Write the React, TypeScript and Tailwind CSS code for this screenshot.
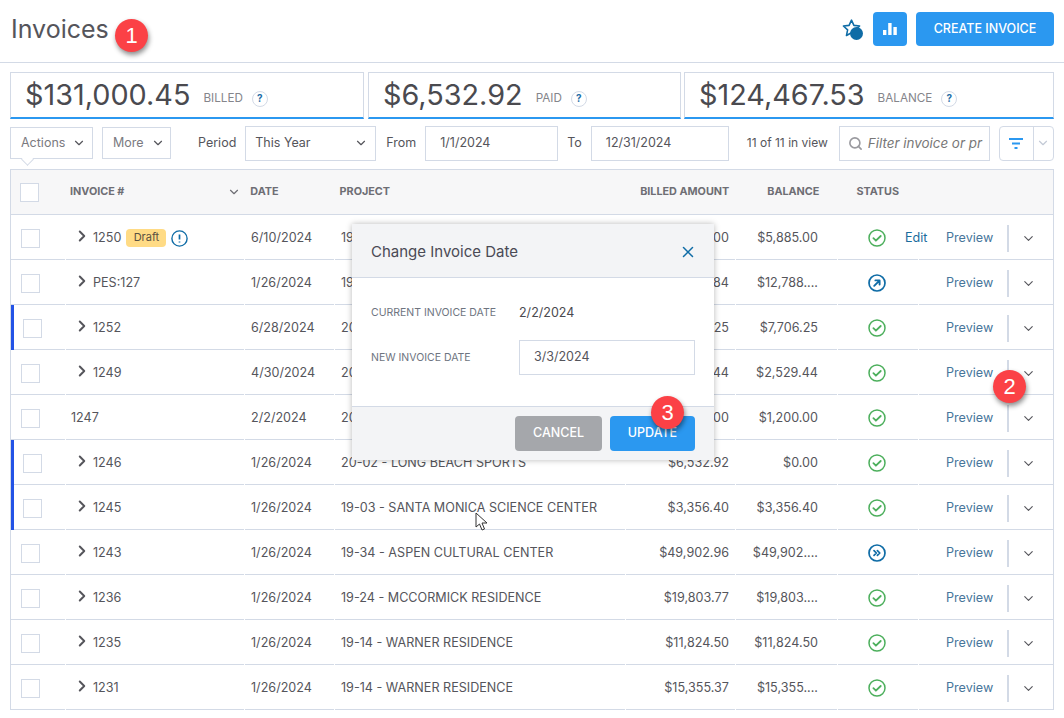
import React from 'react'
import { ChevronDown, ChevronRight, Search, X } from 'lucide-react'

interface Row {
  id: string
  date: string
  project: string
  billed: string
  balance: string
  status: 'ok' | 'sent' | 'forward'
  bar?: boolean
  noExpand?: boolean
  draft?: boolean
}

const rows: Row[] = [
  { id: '1250', date: '6/10/2024', project: '19-24 - MCCORMICK RESIDENCE', billed: '$5,885.00', balance: '$5,885.00', status: 'ok', draft: true },
  { id: 'PES:127', date: '1/26/2024', project: '19-34 - ASPEN CULTURAL CENTER', billed: '$12,788.84', balance: '$12,788....', status: 'sent' },
  { id: '1252', date: '6/28/2024', project: '20-02 - LONG BEACH SPORTS', billed: '$7,706.25', balance: '$7,706.25', status: 'ok', bar: true },
  { id: '1249', date: '4/30/2024', project: '20-02 - LONG BEACH SPORTS', billed: '$2,529.44', balance: '$2,529.44', status: 'ok' },
  { id: '1247', date: '2/2/2024', project: '20-02 - LONG BEACH SPORTS', billed: '$1,200.00', balance: '$1,200.00', status: 'ok', noExpand: true },
  { id: '1246', date: '1/26/2024', project: '20-02 - LONG BEACH SPORTS', billed: '$6,532.92', balance: '$0.00', status: 'ok', bar: true },
  { id: '1245', date: '1/26/2024', project: '19-03 - SANTA MONICA SCIENCE CENTER', billed: '$3,356.40', balance: '$3,356.40', status: 'ok', bar: true },
  { id: '1243', date: '1/26/2024', project: '19-34 - ASPEN CULTURAL CENTER', billed: '$49,902.96', balance: '$49,902....', status: 'forward' },
  { id: '1236', date: '1/26/2024', project: '19-24 - MCCORMICK RESIDENCE', billed: '$19,803.77', balance: '$19,803....', status: 'ok' },
  { id: '1235', date: '1/26/2024', project: '19-14 - WARNER RESIDENCE', billed: '$11,824.50', balance: '$11,824.50', status: 'ok' },
  { id: '1231', date: '1/26/2024', project: '19-14 - WARNER RESIDENCE', billed: '$15,355.37', balance: '$15,355....', status: 'ok' },
]

const StatusIcon = ({ status }: { status: Row['status'] }) => {
  if (status === 'ok') {
    return (
      <svg className="shrink-0" width="18" height="18" viewBox="0 0 18 18" fill="none" stroke="#4caf5c" strokeWidth="1.5" strokeLinecap="round" strokeLinejoin="round">
        <circle cx="9" cy="9" r="8" />
        <path d="M5.4 9.2l2.5 2.5 4.8-4.7" strokeWidth="1.8" />
      </svg>
    )
  }
  if (status === 'sent') {
    return (
      <svg className="shrink-0" width="18" height="18" viewBox="0 0 18 18" fill="none" stroke="#0f6ca6" strokeWidth="1.7" strokeLinecap="round" strokeLinejoin="round">
        <circle cx="9" cy="9" r="8" />
        <path d="M6.2 11.8l5-5M7.4 6.4h4.2v4.2" strokeWidth="1.9" />
      </svg>
    )
  }
  return (
    <svg className="shrink-0" width="18" height="18" viewBox="0 0 18 18" fill="none" stroke="#0f6ca6" strokeWidth="1.7" strokeLinecap="round" strokeLinejoin="round">
      <circle cx="9" cy="9" r="8" />
      <path d="M6 6.6l2.4 2.4L6 11.4M9.4 6.6l2.4 2.4-2.4 2.4" strokeWidth="1.7" />
    </svg>
  )
}

const Help = () => (
  <span className="ml-[9px] mt-[7px] flex h-4 w-4 items-center justify-center rounded-full border border-[#d3dae6] text-[10px] font-bold text-[#1f6fa8]">?</span>
)

const Kpi = ({ value, label, className }: { value: string; label: string; className: string }) => (
  <div className={`flex h-[47px] items-center border border-b-[2px] border-[#d3dae6] border-b-[#2b98f0] pl-[14px] ${className}`}>
    <span className="mt-[1px] text-[28.8px] leading-none text-[#4a4a4f]">{value}</span>
    <span className="ml-[13px] mt-[7px] text-[11.7px] text-[#85858b]">{label}</span>
    <Help />
  </div>
)

const Badge = ({ n, className }: { n: number; className: string }) => (
  <div className={`absolute flex h-[33px] w-[33px] items-center justify-center rounded-full bg-[#fb4146] text-[22px] text-white shadow-[1px_3px_5px_rgba(0,0,0,0.45)] ${className}`}>
    <span style={{ fontFamily: '"Liberation Sans", sans-serif' }}>{n}</span>
  </div>
)

const InvoiceRow = ({ row }: { row: Row }) => (
  <div className="relative flex h-[45px] gap-px text-[12.6px] text-[#55555b]">
    {row.bar && <div className="absolute bottom-0 left-0 top-0 w-[3px] bg-[#2353e6]" />}
    <div className={`flex w-[54px] items-center border-b border-[#d3dae6] pt-[2px] ${row.bar ? 'pl-[12px]' : 'pl-[10px]'}`}>
      <span className="h-[19px] w-[19px] border border-[#d3dae6]" />
    </div>
    <div className="flex w-[178px] items-center border-b border-[#d3dae6] pl-[5px] pt-[2px]">
      {!row.noExpand && <ChevronRight size={18} strokeWidth={2.6} className="-mt-[4px] mr-[2px] ml-[2px] shrink-0 text-[#55555b]" />}
      <span>{row.id}</span>
      {row.draft && (
        <>
          <span className="ml-[5px] flex h-[18px] w-[40px] items-center justify-center rounded bg-[#ffdb85] pb-[2px] text-[11px] text-[#5a5142]">Draft</span>
          <svg className="ml-[5px]" width="17" height="17" viewBox="0 0 17 17" fill="none" stroke="#0f6ca6">
            <circle cx="8.5" cy="8.5" r="7.6" strokeWidth="1.4" />
            <path d="M8.5 4.6v4.8M8.5 11.4v1.2" strokeWidth="1.7" />
          </svg>
        </>
      )}
    </div>
    <div className="flex w-[89px] items-center border-b border-[#d3dae6] pl-[6px] pt-[2px]">{row.date}</div>
    <div className="flex w-[290px] items-center border-b border-[#d3dae6] pl-[6px] pt-[2px]">{row.project}</div>
    <div className="flex w-[109px] items-center justify-end border-b border-[#d3dae6] pr-[6px] pt-[2px]">{row.billed}</div>
    <div className="flex w-[101px] items-center justify-end border-b border-[#d3dae6] pr-[19px] pt-[2px]">{row.balance}</div>
    <div className="flex w-[80px] items-center border-b border-[#d3dae6] pl-[30px] pt-[2px]">
      <StatusIcon status={row.status} />
      {row.draft && <span className="ml-[19px] shrink-0 text-[#1a6c9c]">Edit</span>}
    </div>
    <div className="flex flex-1 items-center border-b border-[#d3dae6] pl-[27px] pt-[2px]">
      <span className="w-[48px] shrink-0 text-[#47769b]">Preview</span>
      <span className="ml-[13px] h-[27px] w-[2px] bg-[#d3dae6]" />
      <ChevronDown size={15} strokeWidth={1.8} className="ml-[12px] text-[#55555b]" />
    </div>
  </div>
)

const App: React.FC = () => {
  return (
    <div className="relative h-[718px] w-[1064px] overflow-hidden bg-white" style={{ fontFamily: 'Inter, "Noto Sans", sans-serif' }}>
      <header className="flex h-[63px] items-center border-b border-[#d3dae6] pl-[11px] pr-[10px]">
        <h1 className="-mt-[3px] text-[25px] font-normal text-[#55555b]">Invoices</h1>
        <div className="-mt-[4px] ml-auto flex items-center">
          <div className="relative mr-[10px] h-[22px] w-[22px]">
            <svg width="21" height="21" viewBox="0 0 20 20" fill="none" stroke="#0f6ca6" strokeWidth="1.5" strokeLinejoin="round">
              <path d="M10 2l2.3 5 5.4.6-4 3.7 1.1 5.4L10 14l-4.8 2.7 1.1-5.4-4-3.7 5.4-.6z" />
            </svg>
            <span className="absolute bottom-0 right-0 h-[13px] w-[13px] rounded-full bg-[#0f6ca6]" />
          </div>
          <button className="flex h-[34px] w-[34px] items-center justify-center rounded bg-[#2b98f0]">
            <svg width="16" height="14" viewBox="0 0 16 14" fill="white">
              <rect x="1" y="8" width="3.4" height="5" />
              <rect x="6.2" y="1" width="3.4" height="12" />
              <rect x="11.4" y="5" width="3.4" height="8" />
            </svg>
          </button>
          <button className="ml-[9px] h-[34px] w-[138px] rounded bg-[#2b98f0] text-[12.5px] font-medium text-white">CREATE INVOICE</button>
        </div>
      </header>

      <div className="mx-[10px] mt-[9px] flex gap-[3px]">
        <Kpi value="$131,000.45" label="BILLED" className="mr-[1px] w-[354px]" />
        <Kpi value="$6,532.92" label="PAID" className="w-[313px]" />
        <Kpi value="$124,467.53" label="BALANCE" className="flex-1" />
      </div>

      <div className="relative mx-[10px] mt-[6px] flex h-[36px] items-center text-[12.5px] text-[#55555b]">
        <button className="flex h-[32px] w-[83px] items-center border border-[#d3dae6] pl-[10px] text-[#7a7a80]">
          Actions
          <ChevronDown size={14} className="ml-[7px] text-[#55555b]" />
        </button>
        <div className="absolute left-[13px] top-[30px] h-[9px] w-[9px] rotate-45 border-b border-r border-[#d3dae6] bg-white" />
        <button className="ml-[9px] flex h-[32px] w-[69px] items-center border border-[#d3dae6] pl-[10px] text-[#7a7a80]">
          More
          <ChevronDown size={14} className="ml-[7px] text-[#55555b]" />
        </button>
        <span className="ml-[27px]">Period</span>
        <div className="ml-[9px] flex h-[35px] w-[131px] items-center justify-between border border-[#d3dae6] pl-[9px] pr-[7px]">
          This Year
          <ChevronDown size={14} />
        </div>
        <span className="ml-[10px]">From</span>
        <div className="ml-[9px] flex h-[35px] w-[133px] items-center border border-[#d3dae6] pl-[14px]">1/1/2024</div>
        <span className="ml-[9px]">To</span>
        <div className="ml-[9px] flex h-[35px] w-[138px] items-center border border-[#d3dae6] pl-[14px]">12/31/2024</div>
        <span className="ml-[18px] w-[92px] text-[12px]">11 of 11 in view</span>
        <div className="flex h-[35px] w-[151px] items-center border border-[#d3dae6] pl-[8px]">
          <Search size={15} strokeWidth={2.6} className="shrink-0 text-[#9a9a9f]" />
          <span className="ml-[5px] w-[120px] overflow-hidden whitespace-nowrap text-[13.4px] italic text-[#777]">Filter invoice or pr</span>
        </div>
        <div className="ml-[9px] flex h-[35px] flex-1 rounded-sm border border-[#d3dae6]">
          <div className="flex w-[34px] items-center justify-center border-r border-[#d3dae6]">
            <svg width="16" height="12" viewBox="0 0 16 12" fill="none" stroke="#2b98f0" strokeWidth="2">
              <path d="M1 2h14M4 6.5h8M6.5 11h3" />
            </svg>
          </div>
          <div className="flex flex-1 items-center justify-center">
            <ChevronDown size={14} className="text-[#c3cad6]" />
          </div>
        </div>
      </div>

      <div className="mx-[10px] mt-[8px] border-l border-r border-t border-[#d3dae6]">
        <div className="flex h-[45px] items-center border-b border-[#d3dae6] bg-[#f7f7f8] text-[10.8px] font-bold text-[#6e6e74]">
          <span className="ml-[9px] h-[19px] w-[19px] border border-[#d3dae6] bg-white" />
          <span className="ml-[31px]">INVOICE #</span>
          <ChevronDown size={14} className="ml-[103px]" />
          <span className="ml-[9px]">DATE</span>
          <span className="ml-[61px]">PROJECT</span>
          <span className="ml-auto">BILLED AMOUNT</span>
          <span className="ml-[38px]">BALANCE</span>
          <span className="ml-[37px] mr-[154px]">STATUS</span>
        </div>
        {rows.map(r => (
          <InvoiceRow key={r.id} row={r} />
        ))}
      </div>

      {/* change date dialog */}
      <div className="absolute left-[352px] top-[224px] w-[362px] bg-white text-[#55555b] shadow-[0_0_6px_rgba(0,0,0,0.28)]">
        <div className="flex h-[54px] items-center justify-between border-b border-[#d3dae6] bg-[#f3f4f6] pl-[19px] pr-[17px] pt-[3px]">
          <span className="text-[15px] text-[#4a4a55]">Change Invoice Date</span>
          <X size={18} strokeWidth={2} className="text-[#0f6ca6]" />
        </div>
        <div className="h-[128px] pl-[19px] pr-[19px] pt-[25px]">
          <div className="flex h-[20px] items-center">
            <span className="w-[148px] text-[10.5px] text-[#6e7480]">CURRENT INVOICE DATE</span>
            <span className="text-[12.5px] text-[#4a4a4f]">2/2/2024</span>
          </div>
          <div className="mt-[17px] flex items-center">
            <span className="w-[148px] text-[10.5px] text-[#6e7480]">NEW INVOICE DATE</span>
            <div className="flex h-[35px] flex-1 items-center border border-[#d3dae6] pl-[14px] text-[12.5px]">3/3/2024</div>
          </div>
        </div>
        <div className="flex h-[54px] items-start justify-end gap-[8px] border-t border-[#d3dae6] bg-[#f3f4f6] pr-[19px] pt-[9px]">
          <button className="h-[35px] w-[87px] rounded bg-[#a5a7ab] text-[12.5px] font-medium text-white">CANCEL</button>
          <button className="h-[35px] w-[85px] rounded bg-[#2b98f0] text-[12.5px] font-medium text-white">UPDATE</button>
        </div>
      </div>

      {/* cursor from the capture */}
      <svg className="absolute left-[475px] top-[512px]" width="14" height="19" viewBox="0 0 14 19" fill="white" stroke="#333" strokeWidth="1">
        <path d="M1 1v14l3.5-3 2.5 6 2.5-1-2.5-6h5z" />
      </svg>

      <Badge n={1} className="left-[115px] top-[19px]" />
      <Badge n={2} className="left-[993px] top-[370px]" />
      <Badge n={3} className="left-[651px] top-[396px]" />
    </div>
  )
}

export default App
